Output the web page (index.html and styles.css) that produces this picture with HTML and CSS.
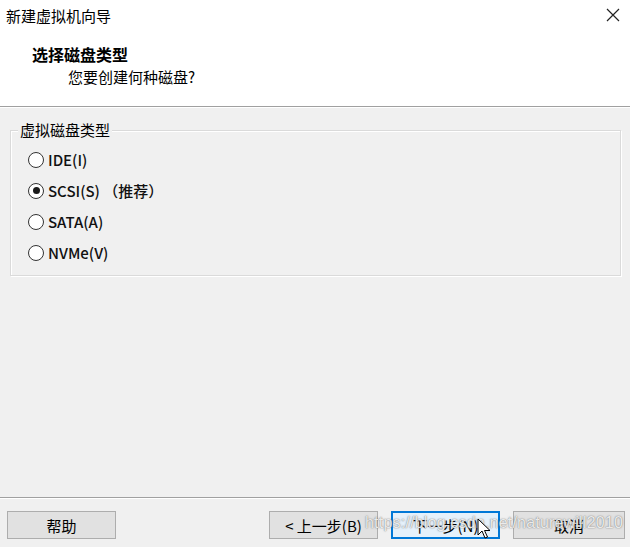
FILE: index.html
```html
<!DOCTYPE html>
<html lang="zh-CN">
<head>
<meta charset="utf-8">
<title>新建虚拟机向导</title>
<link rel="stylesheet" href="styles.css">
</head>
<body>
<div class="window">
  <div class="titlebar">
    <span class="title">新建虚拟机向导</span>
    <svg class="close" width="14" height="14" viewBox="0 0 14 14"><path d="M1 1L13 13M13 1L1 13" stroke="#222" stroke-width="1.2" fill="none"/></svg>
  </div>
  <div class="header">
    <div class="h-title">选择磁盘类型</div>
    <div class="h-sub">您要创建何种磁盘?</div>
  </div>
  <div class="content">
    <div class="group">
      <div class="legend">虚拟磁盘类型</div>
      <div class="radio"><span class="dot"></span><span>IDE(I)</span></div>
      <div class="radio"><span class="dot on"></span><span>SCSI(S) （推荐）</span></div>
      <div class="radio"><span class="dot"></span><span>SATA(A)</span></div>
      <div class="radio"><span class="dot"></span><span>NVMe(V)</span></div>
    </div>
  </div>
  <div class="footer">
    <button class="btn help">帮助</button>
    <div class="spacer"></div>
    <button class="btn">&lt; 上一步(B)</button>
    <button class="btn primary">下一步(N)</button>
    <button class="btn cancel">取消</button>
  </div>
  <div class="watermark">https://blog.csdn.net/naturewill2010</div>
  <svg class="cursor" width="14" height="22" viewBox="0 0 14 22"><path d="M1 1V17L5 13L8 20L10.5 19L7.5 12.5H13Z" fill="#fff" stroke="#000" stroke-width="1"/></svg>
</div>
</body>
</html>
```
FILE: styles.css
```css
* { box-sizing: border-box; }
html, body { margin: 0; padding: 0; }
body {
  background: #f0f0f0;
  font-family: "Noto Sans CJK SC", "Noto Sans", sans-serif;
  font-size: 15px;
  color: #000;
}
.window {
  position: relative;
  width: 630px;
  height: 547px;
  display: flex;
  flex-direction: column;
  overflow: hidden;
}
.titlebar {
  height: 32px;
  background: #fff;
  display: flex;
  align-items: center;
  justify-content: space-between;
  padding: 0 10px 2px 6px;
}
.title { font-size: 15px; line-height: 1; }
.header {
  height: 75px;
  background: #fff;
  border-bottom: 1px solid #a0a0a0;
  box-shadow: 0 1px 0 #fff;
  padding: 13px 0 0 32px;
}
.h-title { font-weight: bold; font-size: 16px; line-height: 19px; }
.h-sub { margin-left: 36px; font-size: 15px; line-height: 19px; margin-top: 3px; }
.content {
  flex: 1;
  padding: 23px 9px 0 10px;
}
.group {
  position: relative;
  height: 146px;
  border: 1px solid #dadada;
  box-shadow: inset 1px 1px 0 #fff, 1px 1px 0 #fff;
  padding: 13px 0 0 17px;
}
.legend {
  position: absolute;
  top: -11px;
  left: 7px;
  padding: 0 2px;
  background: #f0f0f0;
  line-height: 19px;
  font-size: 15px;
}
.radio {
  display: flex;
  align-items: center;
  height: 31px;
  gap: 4px;
  font-size: 15px;
  font-weight: 500;
  color: #111;
}
.dot {
  width: 16px;
  height: 16px;
  border: 1px solid #333;
  border-radius: 50%;
  background: #fff;
  position: relative;
  flex: none;
}
.dot.on::after {
  content: "";
  position: absolute;
  left: 3.5px; top: 3.5px;
  width: 7px; height: 7px;
  border-radius: 50%;
  background: #1a1a1a;
}
.footer {
  height: 50px;
  border-top: 1px solid #a0a0a0;
  box-shadow: inset 0 1px 0 #fff;
  display: flex;
  align-items: flex-start;
  padding: 13px 5px 0 7px;
  gap: 13px;
}
.spacer { flex: 1; }
.btn {
  height: 28px;
  width: 109px;
  border: 1px solid #adadad;
  background: #e1e1e1;
  font-family: inherit;
  font-size: 15px;
  color: #000;
  padding: 0;
}
.btn.primary {
  border: 2px solid #0078d7;
  background: #e5f1fb;
}
.btn.cancel { width: 112px; }
.watermark {
  position: absolute;
  left: 365px;
  top: 514px;
  font-family: "Liberation Sans", Arial, sans-serif;
  font-size: 16px;
  color: rgba(255,255,255,0.85);
  text-shadow: 0 0 1px rgba(90,90,90,0.8), 0 0 2px rgba(120,120,120,0.5);
  letter-spacing: 0.2px;
  pointer-events: none;
}
.cursor {
  position: absolute;
  left: 477px;
  top: 518px;
}
```
